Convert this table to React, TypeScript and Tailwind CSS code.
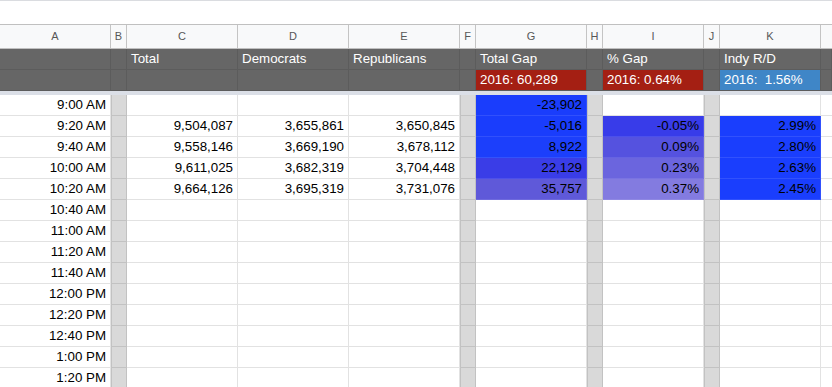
import React from "react";

const COLS =
  "grid grid-cols-[111px_16px_111px_111px_111px_16px_111px_16px_101px_16px_101px_1fr]";

const LETTERS = ["A", "B", "C", "D", "E", "F", "G", "H", "I", "J", "K", ""];

type Cell = { v?: string; bg?: string };

const TIMES = [
  "9:00 AM",
  "9:20 AM",
  "9:40 AM",
  "10:00 AM",
  "10:20 AM",
  "10:40 AM",
  "11:00 AM",
  "11:20 AM",
  "11:40 AM",
  "12:00 PM",
  "12:20 PM",
  "12:40 PM",
  "1:00 PM",
  "1:20 PM",
];

// columns C, D, E, G, I, K per row
const DATA: Record<number, Cell[]> = {
  0: [{}, {}, {}, { v: "-23,902", bg: "bg-[#1a3dfc]" }, {}, {}],
  1: [
    { v: "9,504,087" },
    { v: "3,655,861" },
    { v: "3,650,845" },
    { v: "-5,016", bg: "bg-[#1a3dfc]" },
    { v: "-0.05%", bg: "bg-[#383ce9]" },
    { v: "2.99%", bg: "bg-[#1a3efd]" },
  ],
  2: [
    { v: "9,558,146" },
    { v: "3,669,190" },
    { v: "3,678,112" },
    { v: "8,922", bg: "bg-[#1c3ffb]" },
    { v: "0.09%", bg: "bg-[#5552df]" },
    { v: "2.80%", bg: "bg-[#1a3efd]" },
  ],
  3: [
    { v: "9,611,025" },
    { v: "3,682,319" },
    { v: "3,704,448" },
    { v: "22,129", bg: "bg-[#3a3de7]" },
    { v: "0.23%", bg: "bg-[#6b65de]" },
    { v: "2.63%", bg: "bg-[#1a3efd]" },
  ],
  4: [
    { v: "9,664,126" },
    { v: "3,695,319" },
    { v: "3,731,076" },
    { v: "35,757", bg: "bg-[#5f59d9]" },
    { v: "0.37%", bg: "bg-[#837be0]" },
    { v: "2.45%", bg: "bg-[#1a3efd]" },
  ],
};

function Spacer() {
  return (
    <div className="h-[21px] border-r border-b border-[#c2c2c2] bg-[#d9d9d9] shadow-[inset_1px_0_0_#c2c2c2]" />
  );
}

function DataCell({ cell }: { cell: Cell }) {
  return (
    <div
      className={`h-[21px] border-r border-b pr-[4px] text-right leading-[20px] text-black ${
        cell.bg ? `${cell.bg} border-white/10` : "border-[#e2e2e2]"
      }`}
    >
      {cell.v}
    </div>
  );
}

function DataRow({ i }: { i: number }) {
  const d = DATA[i] ?? [{}, {}, {}, {}, {}, {}];
  return (
    <div className={COLS}>
      <DataCell cell={{ v: TIMES[i] }} />
      <Spacer />
      <DataCell cell={d[0]} />
      <DataCell cell={d[1]} />
      <DataCell cell={d[2]} />
      <Spacer />
      <DataCell cell={d[3]} />
      <Spacer />
      <DataCell cell={d[4]} />
      <Spacer />
      <DataCell cell={d[5]} />
      <div className="h-[21px] border-b border-[#e2e2e2]" />
    </div>
  );
}

function HeaderCell({ text, bg }: { text?: string; bg?: string }) {
  return (
    <div
      className={`h-[21px] overflow-hidden whitespace-pre border-r border-b border-[#5c5c5c] pl-[4px] leading-[20px] text-white ${
        bg ?? "bg-[#666666]"
      }`}
    >
      {text}
    </div>
  );
}

export default function App() {
  const top = ["", "", "Total", "Democrats", "Republicans", "", "Total Gap", "", "% Gap", "", "Indy R/D", ""];

  return (
    <div className="h-[387px] w-[832px] overflow-hidden bg-white font-['Liberation_Sans',Arial,sans-serif] text-[13.33px]">
      <div className="h-[24px] border-t border-[#dadce0]" />

      <div className={`${COLS} border-y border-[#c0c0c0] bg-[#f8f9fa]`}>
        {LETTERS.map((l, i) => (
          <div
            key={i}
            className={`flex h-[23px] items-center justify-center text-[11px] text-[#575757] ${
              i < 11 ? "border-r border-[#c4c4c4]" : ""
            }`}
          >
            {l}
          </div>
        ))}
      </div>

      <div className={COLS}>
        {top.map((t, i) => (
          <HeaderCell key={i} text={t} />
        ))}
      </div>
      <div className={COLS}>
        {top.map((_, i) =>
          i === 6 ? (
            <HeaderCell key={i} text="2016: 60,289" bg="bg-[#a41f13]" />
          ) : i === 8 ? (
            <HeaderCell key={i} text="2016: 0.64%" bg="bg-[#a41f13]" />
          ) : i === 10 ? (
            <HeaderCell key={i} text="2016:  1.56%" bg="bg-[#3f86c7]" />
          ) : (
            <HeaderCell key={i} />
          )
        )}
      </div>

      <div className="h-[4px] bg-[#dbdfe7]" />

      {TIMES.map((_, i) => (
        <DataRow key={i} i={i} />
      ))}
    </div>
  );
}
